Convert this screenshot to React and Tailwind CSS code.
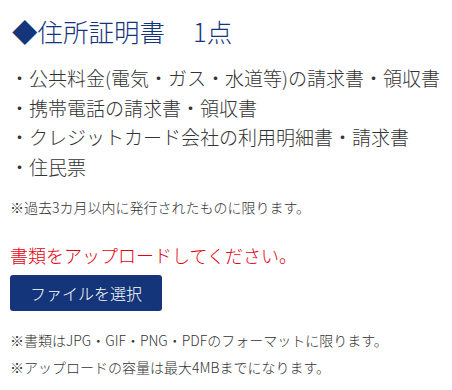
const items = [
  '公共料金(電気・ガス・水道等)の請求書・領収書',
  '携帯電話の請求書・領収書',
  'クレジットカード会社の利用明細書・請求書',
  '住民票',
];

const App = () => {
  return (
    <div className="w-[452px] h-[390px] bg-white pl-[10px] pt-[13px] text-[#333333] font-light font-['Noto_Sans_CJK_JP','Noto_Sans',sans-serif]">
      {/* Heading */}
      <h2 className="text-[25.5px] leading-[36px] text-[#15357a] pl-[2px] flex">
        <span>◆住所証明書</span>
        <span className="ml-[28px]">1点</span>
      </h2>

      {/* Accepted documents */}
      <ul className="mt-[14px] text-[19px] leading-[29.5px]">
        {items.map((item) => (
          <li key={item}>・{item}</li>
        ))}
      </ul>

      <p className="mt-4 text-[14px] leading-[20px]">※過去3カ月以内に発行されたものに限ります。</p>

      <p className="mt-[25px] text-[18px] leading-[26px] text-[#e60012]">書類をアップロードしてください。</p>

      <button className="mt-[7px] w-[152px] h-[36px] rounded-[3px] bg-[#15357a] text-white text-[16px] font-light">
        ファイルを選択
      </button>

      <div className="mt-[16px] text-[14px] leading-[27px]">
        <p>※書類はJPG・GIF・PNG・PDFのフォーマットに限ります。</p>
        <p>※アップロードの容量は最大4MBまでになります。</p>
      </div>
    </div>
  );
};

export default App;
